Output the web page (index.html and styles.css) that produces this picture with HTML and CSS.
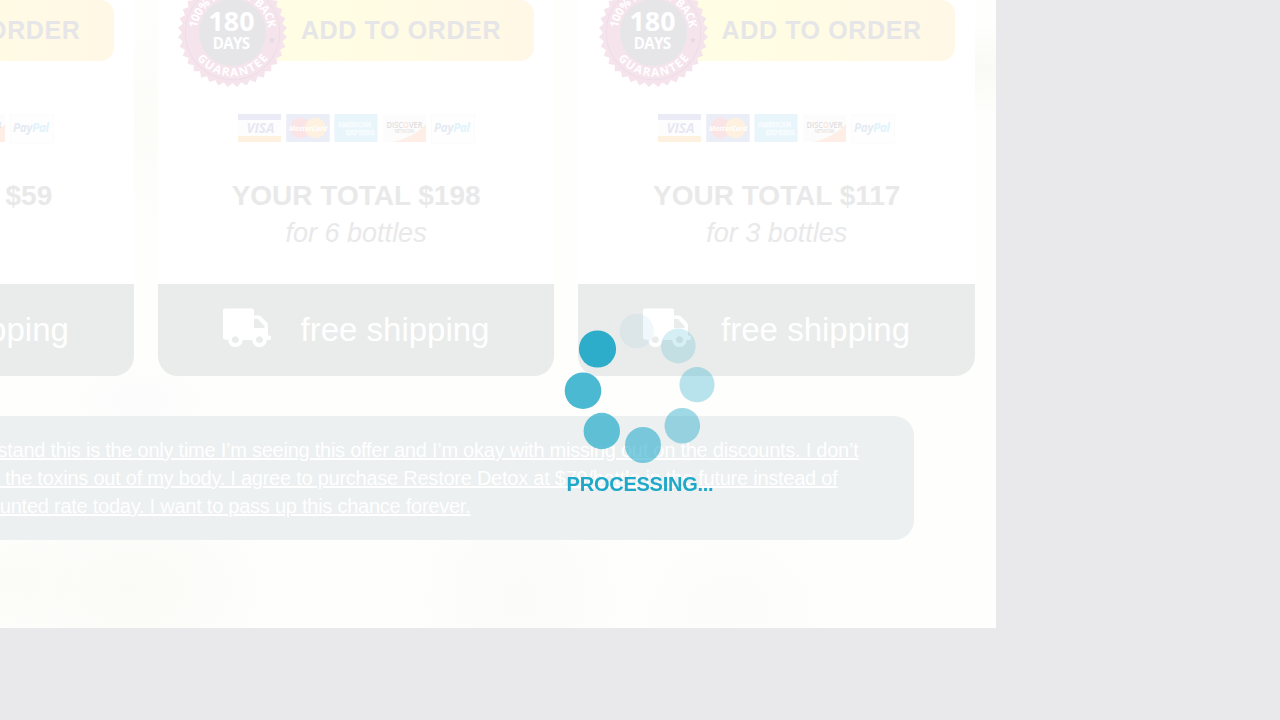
FILE: index.html
```html
<!DOCTYPE html>
<html lang="en">
<head>
<meta charset="utf-8">
<title>Add to order</title>
<link rel="stylesheet" href="styles.css">
</head>
<body>
<svg class="defs" width="0" height="0" aria-hidden="true">
  <defs>
    <symbol id="truck" viewBox="0 0 48 39">
      <path fill="#fff" fill-rule="evenodd" d="M2.200 0.500H29Q31 .5 31 2.500V7.500H35Q37 7.500 38.400 8.900L43.500 14Q45 15.500 45 17.500V27.500H46.500Q48 27.500 48 29V30.500Q48 32 46.500 32H43.700A7 7 0 1 1 29.300 32H19.700A7 7 0 1 1 5.300 31.800H2.200Q0 31.500 0 29.500V2.500Q0 .5 2.200 .5ZM31 11V20H41.500V18L35 11ZM12.300 28.300a3.500 3.500 0 1 0 .01 0ZM36.500 28.300a3.500 3.500 0 1 0 .01 0Z"/>
    </symbol>
    <symbol id="badge" viewBox="-54 -54 108 108">
      <g fill="#f6e4ed">
        <rect id="tooth" x="-38.400" y="-38.400" width="76.800" height="76.800"/>
        <use href="#tooth" transform="rotate(10)"/><use href="#tooth" transform="rotate(20)"/>
        <use href="#tooth" transform="rotate(30)"/><use href="#tooth" transform="rotate(40)"/>
        <use href="#tooth" transform="rotate(50)"/><use href="#tooth" transform="rotate(60)"/>
        <use href="#tooth" transform="rotate(70)"/><use href="#tooth" transform="rotate(80)"/>
      </g>
      <circle r="46.800" fill="none" stroke="#ecdde7" stroke-width="1"/>
      <circle r="33.300" fill="#e6e6e9"/>
      <path id="arcTop" d="M-35.500 0A35.500 35.500 0 0 1 35.500 0" fill="none"/>
      <path id="arcBottom" d="M-43.500 0A43.500 43.500 0 0 0 43.500 0" fill="none"/>
      <g fill="#fff" class="badge-text" text-anchor="middle">
        <text class="badge-ring"><textPath href="#arcTop" startOffset="50%" textLength="103">100% MONEY BACK</textPath></text>
        <text class="badge-ring"><textPath href="#arcBottom" startOffset="50%" textLength="82">GUARANTEE</textPath></text>
        <text class="badge-days" x="-1" y="-1.500">180</text>
        <text class="badge-unit" x="-1" y="16.500" textLength="37">DAYS</text>
      </g>
      <path fill="#e4dae4" d="M39 4.500l.9 2 2.100.2-1.600 1.500.5 2.100-1.900-1.100-1.900 1.100.5-2.100L36 6.700l2.100-.2Z"/>
    </symbol>
    <symbol id="payments" viewBox="0 0 237 30">
      <g class="pay-text">
        <rect width="43" height="28" fill="#fdfdfe"/>
        <path fill="#ebebf7" d="M0 0h43v6H0z"/><path fill="#fef1e0" d="M0 22h43v6H0z"/>
        <text x="8.500" y="19" font-size="13.500" font-style="italic" fill="#e7e7f2" textLength="28">VISA</text>
        <rect x="48.200" width="43.500" height="28" rx="1" fill="#ebedf7"/>
        <circle cx="62.500" cy="14" r="10.200" fill="#fbe4e5"/><circle cx="77.500" cy="14" r="10.200" fill="#fef1e0"/>
        <text x="51" y="16.500" font-size="7.500" font-style="italic" fill="#fff" textLength="38" lengthAdjust="spacingAndGlyphs">MasterCard</text>
        <rect x="96.500" width="43" height="28" fill="#e8f6fc"/>
        <g fill="#e8f6fc" stroke="#fafdff" stroke-width=".6"><text x="100" y="13" font-size="6.800" textLength="33" lengthAdjust="spacingAndGlyphs">AMERICAN</text><text x="107.500" y="20.500" font-size="6.800" textLength="29" lengthAdjust="spacingAndGlyphs">EXPRESS</text></g>
        <rect x="145" y=".5" width="43" height="27.500" rx="1" fill="#fcfcfc"/>
        <path fill="#feeee5" d="M188 10V28H155Q177 23 188 10Z"/>
        <text x="148.500" y="13.500" font-size="8" font-weight="600" fill="#dfdfe2" textLength="36" lengthAdjust="spacingAndGlyphs">DISC<tspan fill="#fde3d3">O</tspan>VER</text>
        <text x="156.500" y="19" font-size="4.500" font-weight="400" fill="#dedede" textLength="20">NETWORK</text>
        <rect x="193.500" y="1" width="43" height="28" fill="#fefefe" stroke="#f9f9fa" stroke-width=".6"/>
        <text x="196" y="18" font-size="11.500" font-style="italic" fill="#e5ebf3" textLength="36">Pay<tspan fill="#e1f3fb">Pal</tspan></text>
      </g>
    </symbol>
  </defs>
</svg>

<main class="offer">
  <div class="cards">
    <article class="card">
      <div class="order"><button class="add">ADD TO ORDER</button><svg class="badge"><use href="#badge"/></svg></div>
      <svg class="payments"><use href="#payments"/></svg>
      <h2 class="total">YOUR TOTAL $59</h2>
      <p class="count">for 1 bottle</p>
      <footer class="shipping"><svg class="truck"><use href="#truck"/></svg><span>free shipping</span></footer>
    </article>
    <article class="card">
      <div class="order"><button class="add">ADD TO ORDER</button><svg class="badge"><use href="#badge"/></svg></div>
      <svg class="payments"><use href="#payments"/></svg>
      <h2 class="total">YOUR TOTAL $198</h2>
      <p class="count">for 6 bottles</p>
      <footer class="shipping"><svg class="truck"><use href="#truck"/></svg><span>free shipping</span></footer>
    </article>
    <article class="card">
      <div class="order"><button class="add">ADD TO ORDER</button><svg class="badge"><use href="#badge"/></svg></div>
      <svg class="payments"><use href="#payments"/></svg>
      <h2 class="total">YOUR TOTAL $117</h2>
      <p class="count">for 3 bottles</p>
      <footer class="shipping"><svg class="truck"><use href="#truck"/></svg><span>free shipping</span></footer>
    </article>
  </div>
  <a class="decline">
    <span class="line line-first">No thanks, I understand this is the only time I’m seeing this offer and I’m okay with missing out on the discounts. I don’t</span>
    <span class="line line-second">need to get all the toxins out of my body. I agree to purchase Restore Detox at $79/bottle in the future instead of</span>
    <span class="line line-third">at the discounted rate today. I want to pass up this chance forever.</span>
  </a>
</main>

<div class="processing">
  <svg class="spinner" viewBox="560 310 160 156" fill="#1fa8c8">
    <circle cx="597.500" cy="349" r="18.600" opacity=".93"/>
    <circle cx="583" cy="390.700" r="18.300" opacity=".8"/>
    <circle cx="601.800" cy="431" r="18.200" opacity=".69"/>
    <circle cx="643" cy="445" r="18" opacity=".56"/>
    <circle cx="682.300" cy="425.700" r="17.800" opacity=".42"/>
    <circle cx="697" cy="384.700" r="17.600" opacity=".31"/>
    <circle cx="678.300" cy="346" r="17.400" opacity=".19"/>
    <circle cx="636.700" cy="331" r="17.200" opacity=".07" fill="#2f9fd0"/>
  </svg>
  <span class="processing-label">PROCESSING...</span>
</div>
</body>
</html>
```

FILE: styles.css
```css
* { box-sizing: border-box; }
body {
  margin: 0;
  height: 720px;
  overflow: hidden;
  background: #e9e9eb;
  font-family: "Liberation Sans", Arial, sans-serif;
}
.defs { position: absolute; }
.offer {
  display: flex;
  flex-direction: column;
  align-items: flex-end;
  gap: 40px;
  width: 996px;
  height: 628px;
  padding-right: 21px;
  overflow: hidden;
  background:
    radial-gradient(ellipse at 980px 70px, #f9faf5 0, transparent 80px),
    radial-gradient(ellipse at 145px 120px, #fcfcf9 0, transparent 200px),
    radial-gradient(ellipse at 130px 590px, #fafbf7 0, transparent 150px),
    radial-gradient(ellipse at 0 580px, #fbfcf7 0, transparent 90px),
    radial-gradient(ellipse at 140px 400px, #fcfcfd 0, transparent 90px),
    radial-gradient(ellipse at 520px 600px, #fbfbfa 0, transparent 120px),
    radial-gradient(ellipse at 730px 610px, #fcfcfb 0, transparent 120px),
    #fefefc;
}
.cards { display: flex; gap: 24px; }
.card {
  display: flex;
  flex-direction: column;
  align-items: center;
  flex: none;
  width: 396.6px;
  height: 376px;
  overflow: hidden;
  background: #fff;
  border-radius: 0 0 20px 20px;
}
.order {
  position: relative;
  display: flex;
  justify-content: flex-end;
  width: 356px;
  height: 61px;
}
.add {
  width: 300px;
  height: 61px;
  padding: 0 33px 0 0;
  border: 0;
  border-radius: 14px;
  background: linear-gradient(90deg, #fffde3 30%, #fff8e6 95%);
  color: #e6e6e9;
  font: bold 25px/61px "Liberation Sans", Arial, sans-serif;
  letter-spacing: .63px;
  text-align: right;
  white-space: nowrap;
}
.badge { position: absolute; left: 0; top: -22px; width: 109px; height: 109px; }
.badge-text { font-family: "Open Sans", "Noto Sans", sans-serif; font-weight: 700; }
.badge-ring { font-size: 11.500px; }
.badge-days { font-size: 26.500px; }
.badge-unit { font-size: 15px; }
.payments { width: 237px; height: 30px; margin-top: 53px; }
.pay-text { font-family: "Open Sans", sans-serif; font-weight: 700; }
.total {
  margin: 34px 0 0;
  color: #e9e9ea;
  font-size: 28px;
  line-height: 36px;
  white-space: nowrap;
}
.count {
  margin: 1px 0 0;
  color: #e9e9ea;
  font-size: 27px;
  font-style: italic;
  line-height: 36px;
}
.shipping {
  display: flex;
  align-items: center;
  gap: 30px;
  width: 100%;
  height: 92px;
  margin-top: auto;
  padding-left: 64.700px;
  background: #eaeceb;
  color: #fff;
  font-size: 33px;
}
.truck { width: 48px; height: 39px; margin-top: -5px; }
.decline {
  display: flex;
  flex-direction: column;
  align-items: flex-end;
  flex: none;
  width: 1116px;
  height: 124px;
  margin-right: 61px;
  padding: 20px 0;
  border-radius: 20px;
  background: #ecf0f1;
  color: #fff;
  font-size: 20px;
  line-height: 28px;
  letter-spacing: -.245px;
  white-space: nowrap;
}
.line { text-decoration: underline; }
.line-first { margin-right: 55.500px; }
.line-second { margin-right: 76.500px; }
.line-third { margin-right: 443.500px; }
.processing {
  position: fixed;
  left: 560px;
  top: 310px;
  display: flex;
  flex-direction: column;
  align-items: center;
  width: 160px;
}
.spinner { width: 160px; height: 156px; }
.processing-label {
  margin-top: 6px;
  color: #1fa8c8;
  font-size: 20px;
  font-weight: bold;
  line-height: 24px;
  letter-spacing: -.25px;
}
```
